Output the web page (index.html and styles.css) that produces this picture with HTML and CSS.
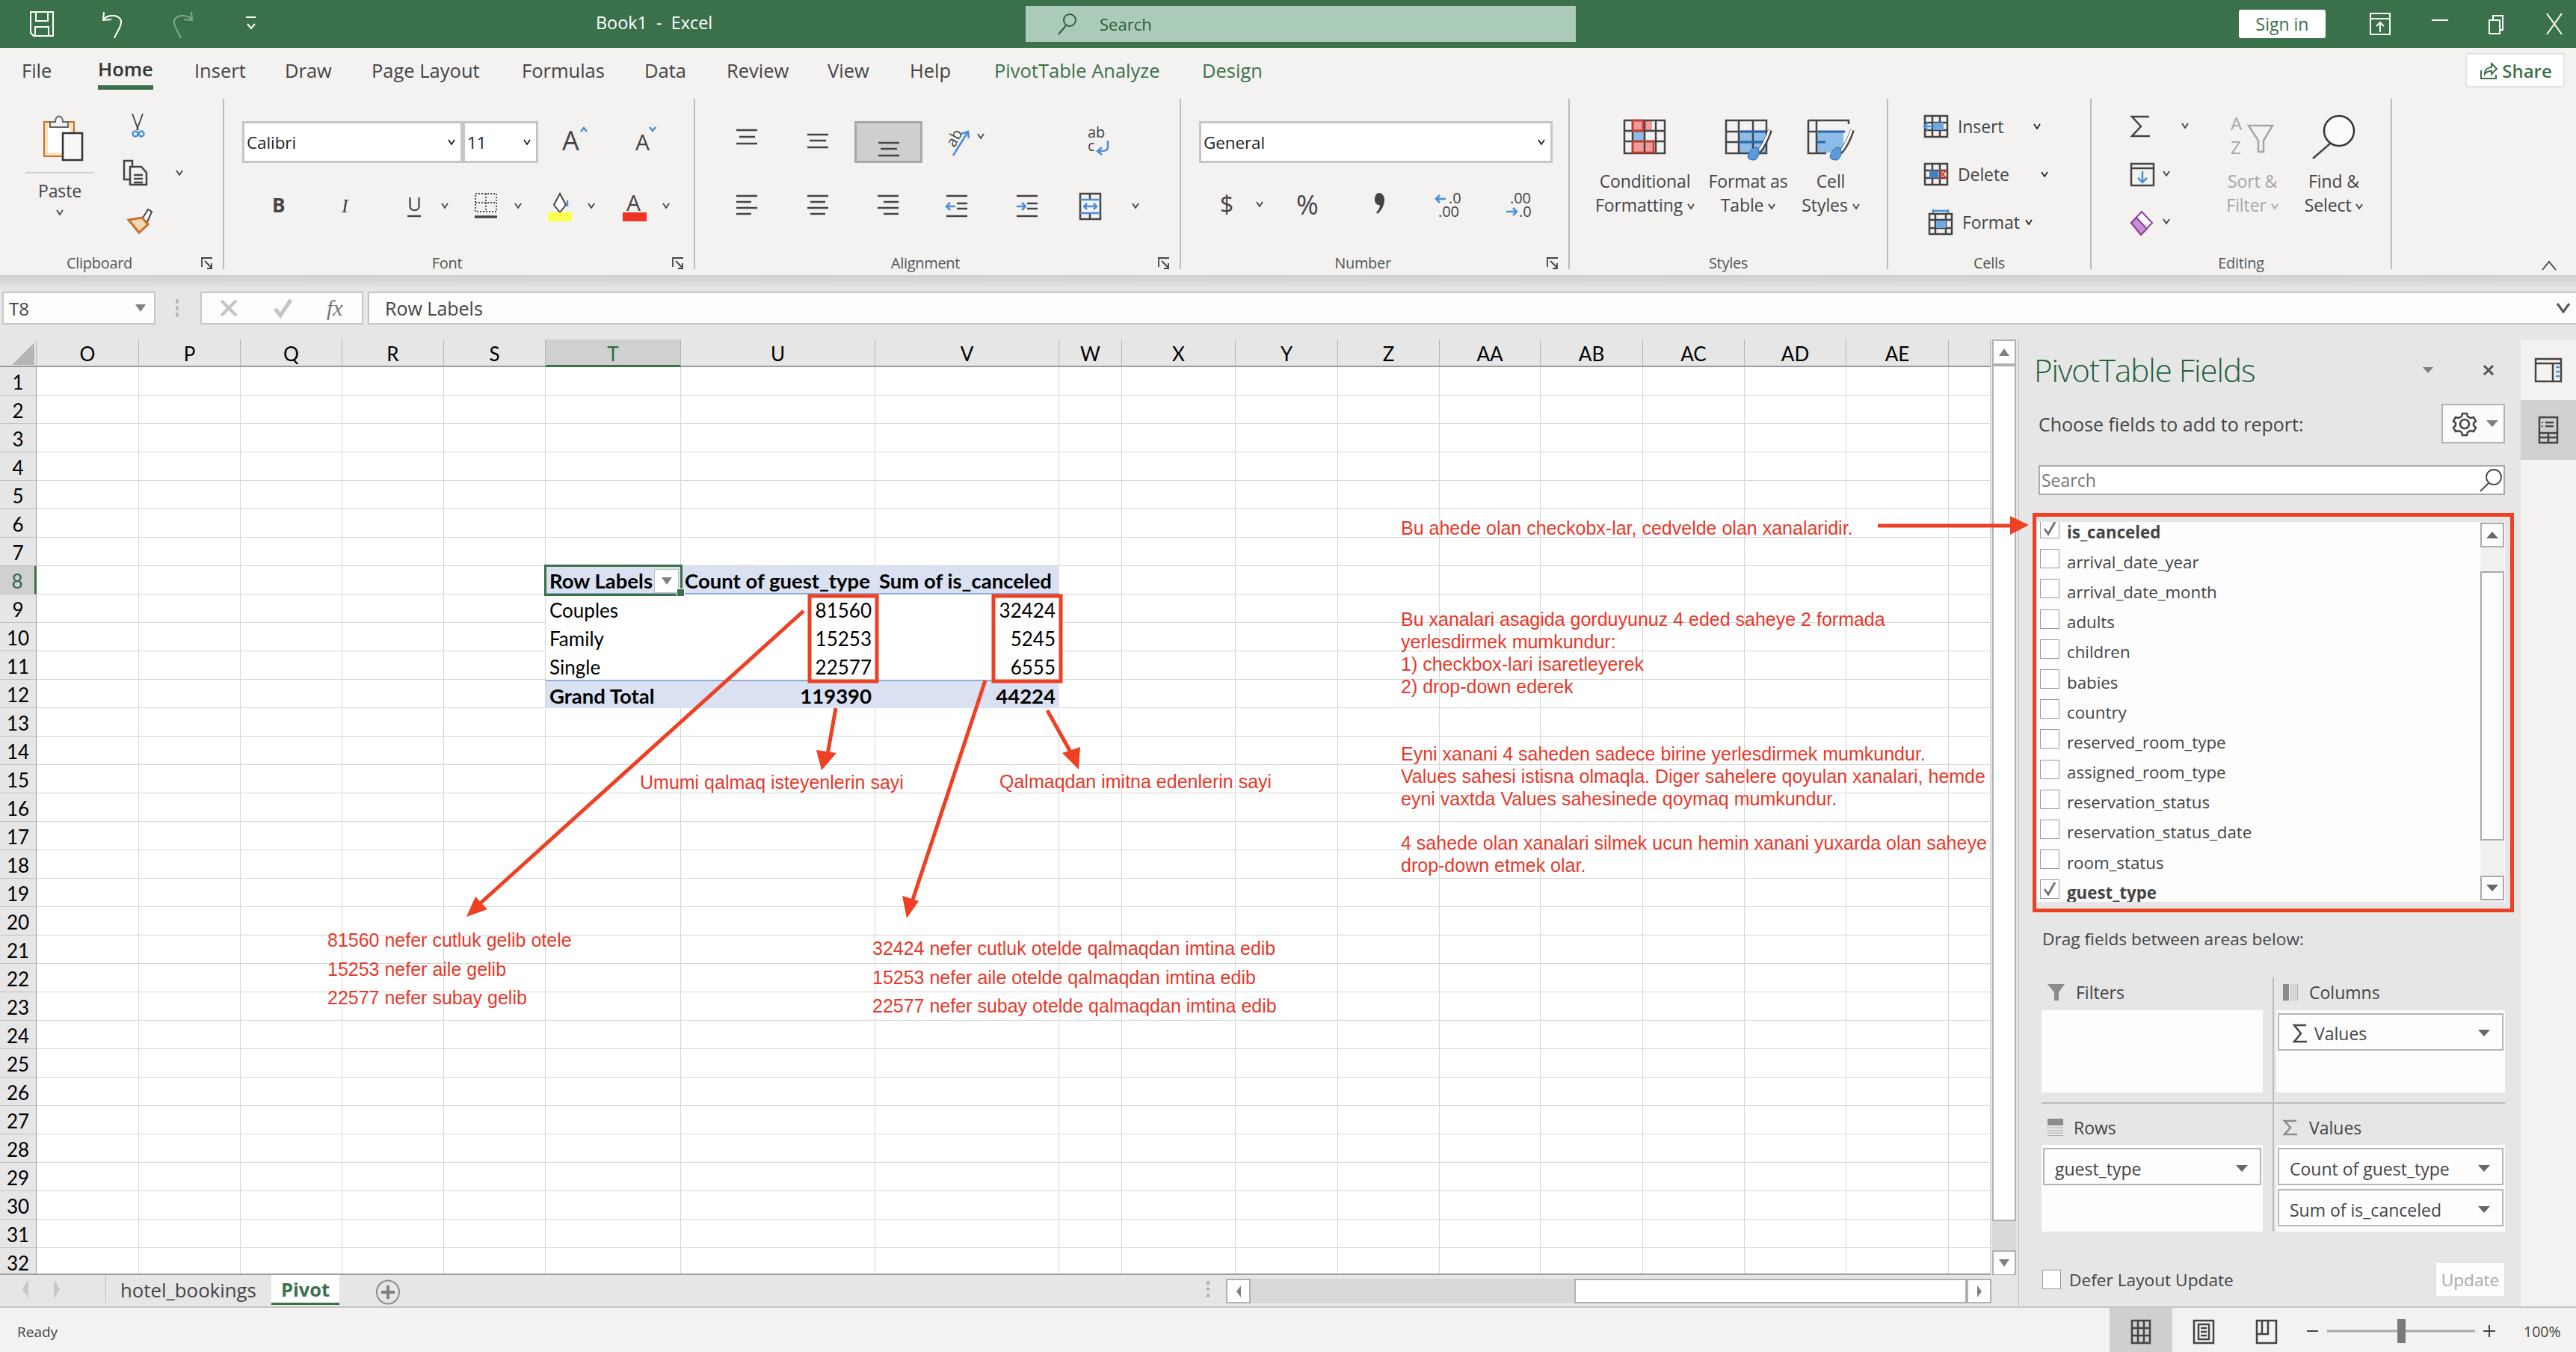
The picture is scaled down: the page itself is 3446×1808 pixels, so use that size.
FILE: index.html
```html
<!DOCTYPE html>
<html lang="en">

<head>
    <meta charset="UTF-8">
    <title>Book1 - Excel</title>
    <link rel="stylesheet" href="styles.css">
</head>

<body>
    <div class="app">
        <!-- title bar -->
        <div class="titlebar">
            <div class="qat">
                <svg width="96" height="40" viewBox="0 0 96 40"><path class="wl" d="M1 4h30v32H5l-4-4zM8 4v12h16V4M7 36V24h18v12"/></svg>
                <svg width="94" height="40" viewBox="0 0 94 40"><path class="wl" d="M3 4l-1 11 11-1M2 14C10 6 24 8 26 16c1 8-6 14-9 23"/></svg>
                <svg width="98" height="40" viewBox="0 0 98 40"><path class="wl faded" d="M26 4l1 11-11-1M27 14C19 6 5 8 3 16c-1 8 6 14 9 23"/></svg>
                <svg width="16" height="40" viewBox="0 0 16 40"><path class="wl" d="M1 11h13M3 20l5 6 5-6"/></svg>
            </div>
            <div class="doc-title">Book1&nbsp; - &nbsp;Excel</div>
            <div class="tell-me">
                <svg width="30" height="30" viewBox="0 0 30 30"><circle class="dk" cx="19" cy="10" r="8"/><path class="dk" d="M14 17L4 29"/></svg>
                <span>Search</span>
            </div>
            <div class="signin">Sign in</div>
            <svg class="win-btns" width="335" height="64" viewBox="0 0 335 64">
                <path class="wl" d="M60 19h26v28H60zM60 26h26M73 44V31M68 36l5-5 5 5"/>
                <path class="wl" d="M142 28h22"/>
                <path class="wl" d="M219 28h14v18h-14zM224 28v-6h13v19h-4"/>
                <path class="wl" d="M296 19l20 28M316 19l-20 28"/>
            </svg>
        </div>

        <!-- ribbon tabs -->
        <div class="tabs">
            <span>File</span>
            <span class="active">Home</span>
            <span>Insert</span>
            <span>Draw</span>
            <span>Page Layout</span>
            <span>Formulas</span>
            <span>Data</span>
            <span>Review</span>
            <span>View</span>
            <span>Help</span>
            <span class="ctx">PivotTable Analyze</span>
            <span class="ctx">Design</span>
            <div class="share">
                <svg width="26" height="24" viewBox="0 0 26 24"><path class="gr" d="M4 12v11h20v-5M9 17c0-6 4-9 9-9V3l7 7-7 7v-4c-4 0-7 1-9 4z"/></svg>
                Share
            </div>
        </div>

        <!-- ribbon -->
        <div class="ribbon">
            <div class="group g-clip">
                <div class="group-body clip-body">
                    <div class="paste">
                        <svg width="56" height="62" viewBox="0 0 56 62">
                            <rect x="1" y="9" width="40" height="46" fill="#fbe3b5" stroke="#c8702a" stroke-width="2"/>
                            <rect x="6" y="16" width="30" height="34" fill="#fff"/>
                            <path d="M9 16v-7h7c0-10 10-10 10 0h7v7z" fill="#f3f3f3" stroke="#666" stroke-width="2"/>
                            <rect x="26" y="24" width="26" height="36" fill="#f8f8f8" stroke="#333" stroke-width="2.5"/>
                        </svg>
                        <div class="paste-line"></div>
                        <div class="paste-text">Paste</div>
                        <svg width="10" height="8" viewBox="0 0 10 8"><path class="ch" d="M1 1l4 6 4-6"/></svg>
                    </div>
                    <div class="clip-tools">
                        <svg width="60" height="32" viewBox="0 0 60 32">
                            <path class="ln thin" d="M12 0l8 22M26 0l-8 22"/>
                            <circle class="bl" cx="16" cy="27" r="3.5"/><circle class="bl" cx="24" cy="27" r="3.5"/>
                        </svg>
                        <svg width="88" height="34" viewBox="0 0 88 34">
                            <path class="ln" d="M9 26H1V1h11v8"/>
                            <path class="ln" d="M9 9h15l7 8v16H9zM14 20h12M14 25h12M14 30h12"/>
                            <path class="ch" d="M71 14l4 6 4-6"/>
                        </svg>
                        <svg width="60" height="34" viewBox="0 0 60 34">
                            <path d="M25 15l8-13 5 3-6 14z" fill="#fff" stroke="#444" stroke-width="2"/>
                            <path d="M7 16l18-3 8 9-12 11z" fill="#f4d9b4" stroke="#c8702a" stroke-width="3"/>
                        </svg>
                    </div>
                </div>
                <div class="group-foot">
                    <span class="group-label">Clipboard</span>
                    <svg class="launcher" width="16" height="16" viewBox="0 0 16 16"><path class="ln thin" d="M15 1H1v12M5 5l9 9M14 8v7H8"/></svg>
                </div>
            </div>

            <div class="group g-font">
                <div class="group-body">
                    <div class="font-top">
                        <div class="select sel-font">Calibri <svg width="10" height="8" viewBox="0 0 10 8"><path class="ch dark" d="M1 1l4 6 4-6"/></svg></div>
                        <div class="select sel-size">11 <svg width="10" height="8" viewBox="0 0 10 8"><path class="ch dark" d="M1 1l4 6 4-6"/></svg></div>
                        <svg class="grow" width="98" height="56" viewBox="0 0 98 56"><text class="glyph g36" x="0" y="39">A</text><path class="bl" d="M25 14l4-5 4 5"/></svg>
                        <svg width="40" height="56" viewBox="0 0 40 56"><text class="glyph g30" x="0" y="39">A</text><path class="bl" d="M19 8l4 5 4-5"/></svg>
                    </div>
                    <div class="font-bottom">
                        <svg width="93" height="34" viewBox="0 0 93 34"><text class="glyph g26 bold" x="0" y="26">B</text></svg>
                        <svg width="88" height="34" viewBox="0 0 88 34"><text class="glyph g26 ital" x="0" y="26">I</text></svg>
                        <svg width="90" height="34" viewBox="0 0 90 34"><text class="glyph g26" x="0" y="24">U</text><path class="ln" d="M0 31h18"/><path class="ch" d="M46 14l4 6 4-6"/></svg>
                        <svg width="98" height="34" viewBox="0 0 98 34"><path class="ln dash" d="M1 1h28v24H1zM15 1v24M1 13h28"/><path class="ln thick" d="M0 32h30"/><path class="ch" d="M54 14l4 6 4-6"/></svg>
                        <svg width="100" height="38" viewBox="0 0 100 38"><path d="M16 1l8 15-8 10-8-10z" fill="#fff" stroke="#444" stroke-width="2"/><path class="bl thick" d="M26 10v8"/><rect x="0" y="26" width="32" height="12" fill="#ffff4d"/><path class="ch" d="M54 14l4 6 4-6"/></svg>
                        <svg width="66" height="38" viewBox="0 0 66 38"><text class="glyph g30" x="5" y="24">A</text><rect x="0" y="26" width="32" height="12" fill="#ee3224"/><path class="ch" d="M54 14l4 6 4-6"/></svg>
                    </div>
                </div>
                <div class="group-foot">
                    <span class="group-label">Font</span>
                    <svg class="launcher" width="16" height="16" viewBox="0 0 16 16"><path class="ln thin" d="M15 1H1v12M5 5l9 9M14 8v7H8"/></svg>
                </div>
            </div>

            <div class="group g-align">
                <div class="group-body">
                    <div class="align-top">
                        <svg width="95" height="56" viewBox="0 0 95 56"><path class="ln" d="M0 12h28M4 21h21M0 30h28"/></svg>
                        <svg width="63" height="56" viewBox="0 0 63 56"><path class="ln" d="M0 18h28M3 26h22M0 35h28"/></svg>
                        <div class="align-on"><svg width="28" height="56" viewBox="0 0 28 56"><path class="ln" d="M0 26h28M3 34h22M0 43h28"/></svg></div>
                        <svg class="orient" width="192" height="56" viewBox="0 0 192 56">
                            <text class="glyph g20" transform="translate(14 36) rotate(-62)">ab</text>
                            <path class="bl" d="M12 46l20-32M23 17l9-3 1 9"/>
                            <path class="ch" d="M45 17l4 6 4-6"/>
                        </svg>
                        <svg width="34" height="56" viewBox="0 0 34 56">
                            <text class="glyph g20" x="0" y="22">ab</text>
                            <text class="glyph g20" x="0" y="40">c</text>
                            <path class="bl" d="M27 26v9c0 5-5 5-13 5M19 35l-6 5 6 5"/>
                        </svg>
                    </div>
                    <div class="align-bottom">
                        <svg width="95" height="34" viewBox="0 0 95 34"><path class="ln" d="M0 4h28M0 12h20M0 20h28M0 28h20"/></svg>
                        <svg width="94" height="34" viewBox="0 0 94 34"><path class="ln" d="M0 4h28M4 12h20M0 20h28M4 28h20"/></svg>
                        <svg width="92" height="34" viewBox="0 0 92 34"><path class="ln" d="M0 4h28M8 12h20M0 20h28M8 28h20"/></svg>
                        <svg width="94" height="34" viewBox="0 0 94 34"><path class="ln" d="M0 4h28M14 14h14M14 21h14M0 31h28"/><path class="bl" d="M12 18H0M5 13l-5 5 5 5"/></svg>
                        <svg width="84" height="34" viewBox="0 0 84 34"><path class="ln" d="M0 4h28M14 14h14M14 21h14M0 31h28"/><path class="bl" d="M0 18h12M7 13l5 5-5 5"/></svg>
                        <svg width="84" height="36" viewBox="0 0 84 36"><path class="ln" d="M1 1h27v34H1zM14 1v8M14 27v8"/><path class="bl" d="M1 9h27M1 27h27M6 18h17M10 14l-4 4 4 4M19 14l4 4-4 4"/><path class="ch" d="M71 14l4 6 4-6"/></svg>
                    </div>
                </div>
                <div class="group-foot">
                    <span class="group-label">Alignment</span>
                    <svg class="launcher" width="16" height="16" viewBox="0 0 16 16"><path class="ln thin" d="M15 1H1v12M5 5l9 9M14 8v7H8"/></svg>
                </div>
            </div>

            <div class="group g-number">
                <div class="group-body">
                    <div class="select sel-num">General <svg width="10" height="8" viewBox="0 0 10 8"><path class="ch dark" d="M1 1l4 6 4-6"/></svg></div>
                    <div class="num-bottom">
                        <svg width="99" height="36" viewBox="0 0 99 36"><text class="glyph g32" x="-4" y="29">$</text><path class="ch" d="M45 14l4 6 4-6"/></svg>
                        <svg width="102" height="36" viewBox="0 0 102 36"><text class="glyph g36" x="-1" y="31">%</text></svg>
                        <svg width="83" height="36" viewBox="0 0 83 36"><path d="M8 2c4 0 7 4 7 9 0 8-4 14-9 19l-2-2c3-3 5-6 5-10-3 1-7-2-7-7s2-9 6-9z" fill="#444"/></svg>
                        <svg width="94" height="36" viewBox="0 0 94 36">
                            <text class="glyph g20" x="18" y="16">.0</text><text class="glyph g20" x="4" y="34">.00</text>
                            <path class="bl" d="M14 10H1M6 5l-5 5 5 5"/>
                        </svg>
                        <svg width="40" height="36" viewBox="0 0 40 36">
                            <text class="glyph g20" x="6" y="16">.00</text><text class="glyph g20" x="18" y="34">.0</text>
                            <path class="bl" d="M1 27h14M10 22l5 5-5 5"/>
                        </svg>
                    </div>
                </div>
                <div class="group-foot">
                    <span class="group-label">Number</span>
                    <svg class="launcher" width="16" height="16" viewBox="0 0 16 16"><path class="ln thin" d="M15 1H1v12M5 5l9 9M14 8v7H8"/></svg>
                </div>
            </div>

            <div class="group g-styles">
                <div class="group-body styles-body">
                    <div class="big big-cf">
                        <div class="big-icon">
                            <svg width="58" height="46" viewBox="0 0 58 46">
                                <rect x="12" y="1" width="26" height="14" fill="#f19a9a"/><rect x="12" y="15" width="16" height="14" fill="#8dbce8"/><rect x="12" y="29" width="28" height="15" fill="#f19a9a"/>
                                <path class="ln" d="M1 1h54v44H1zM12 1v44M28 1v44M43 1v44M1 15h54M1 29h54"/>
                                <path d="M12 1h14v14H12zM12 29h28v15H12z" fill="none" stroke="#c8392b" stroke-width="2.5"/>
                            </svg>
                        </div>
                        <div>Conditional</div>
                        <div>Formatting <svg width="10" height="8" viewBox="0 0 10 8"><path class="ch" d="M1 1l4 6 4-6"/></svg></div>
                    </div>
                    <div class="big big-ft">
                        <div class="big-icon">
                            <svg width="62" height="56" viewBox="0 0 62 56">
                                <rect x="18" y="16" width="36" height="28" fill="#8dbce8"/>
                                <path class="ln" d="M1 1h54v44H1zM1 16h54M1 30h54M18 1v44M37 1v44"/>
                                <path d="M18 16h36M18 30h36" stroke="#2a66b0" stroke-width="3"/>
                                <path d="M60 14c-4 12-9 22-16 30" fill="none" stroke="#444" stroke-width="6"/>
                                <path d="M59 14c-4 12-9 22-16 30" fill="none" stroke="#fff" stroke-width="3"/>
                                <path d="M30 50c2-10 8-15 14-12 3 6 0 16-6 16-4 0-7-1-8-4z" fill="#5b9bd8" stroke="#2a66b0"/>
                            </svg>
                        </div>
                        <div>Format as</div>
                        <div>Table <svg width="10" height="8" viewBox="0 0 10 8"><path class="ch" d="M1 1l4 6 4-6"/></svg></div>
                    </div>
                    <div class="big big-cs">
                        <div class="big-icon">
                            <svg width="62" height="56" viewBox="0 0 62 56">
                                <rect x="12" y="16" width="36" height="28" fill="#8dbce8"/>
                                <path class="ln" d="M1 1h54v5M1 1v44h24M12 1v44M1 16h12"/>
                                <path d="M12 16h38M12 30h12" stroke="#2a66b0" stroke-width="3"/>
                                <path d="M60 14c-4 12-9 22-16 30" fill="none" stroke="#444" stroke-width="6"/>
                                <path d="M59 14c-4 12-9 22-16 30" fill="none" stroke="#fff" stroke-width="3"/>
                                <path d="M30 50c2-10 8-15 14-12 3 6 0 16-6 16-4 0-7-1-8-4z" fill="#5b9bd8" stroke="#2a66b0"/>
                            </svg>
                        </div>
                        <div>Cell</div>
                        <div>Styles <svg width="10" height="8" viewBox="0 0 10 8"><path class="ch" d="M1 1l4 6 4-6"/></svg></div>
                    </div>
                </div>
                <div class="group-foot no-launch"><span class="group-label">Styles</span></div>
            </div>

            <div class="group g-cells">
                <div class="group-body cells-body">
                    <div class="cell-btn c-insert">
                        <svg width="45" height="30" viewBox="0 0 45 30"><path class="ln" d="M1 1h30v28H1zM1 10h30M1 20h30M11 1v28M21 1v28"/><rect x="12" y="10" width="14" height="10" fill="#6fa8dc"/><path class="bl" d="M13 15H0M5 10l-5 5 5 5"/></svg>
                        <span>Insert</span>
                        <svg width="10" height="8" viewBox="0 0 10 8"><path class="ch dark" d="M1 1l4 6 4-6"/></svg>
                    </div>
                    <div class="cell-btn c-delete">
                        <svg width="45" height="30" viewBox="0 0 45 30"><path class="ln" d="M1 1h30v28H1zM1 10h30M1 20h30M11 1v28M21 1v28"/><rect x="7" y="10" width="12" height="10" fill="#3f7fc4"/><path d="M20 9l10 12M30 9L20 21" fill="none" stroke="#e8392a" stroke-width="2"/></svg>
                        <span>Delete</span>
                        <svg width="10" height="8" viewBox="0 0 10 8"><path class="ch dark" d="M1 1l4 6 4-6"/></svg>
                    </div>
                    <div class="cell-btn c-format">
                        <svg width="45" height="34" viewBox="0 0 45 34"><path class="bl" d="M6 2h20M6 0v5M26 0v5"/><path class="ln" d="M1 6h30v27H1zM1 14h30M1 25h30M9 6v27M23 6v27"/><rect x="10" y="15" width="13" height="10" fill="#6fa8dc"/></svg>
                        <span>Format</span>
                        <svg width="10" height="8" viewBox="0 0 10 8"><path class="ch dark" d="M1 1l4 6 4-6"/></svg>
                    </div>
                </div>
                <div class="group-foot no-launch"><span class="group-label">Cells</span></div>
            </div>

            <div class="group g-edit">
                <div class="group-body edit-body">
                    <div class="edit-tools">
                        <svg width="90" height="30" viewBox="0 0 90 30"><path class="ln" d="M25 2H2l12 13L2 28h24"/><path class="ch" d="M69 11l4 6 4-6"/></svg>
                        <svg width="60" height="30" viewBox="0 0 60 30"><path class="ln" d="M1 1h30v29H1zM1 7h30"/><path class="bl" d="M16 11v15M10 20l6 6 6-6"/><path class="ch" d="M44 11l4 6 4-6"/></svg>
                        <svg width="60" height="32" viewBox="0 0 60 32"><path d="M15 1l14 15-15 16L1 16z" fill="#fff" stroke="#8c3fa0" stroke-width="2"/><path d="M8 9l14 15-8 8L1 16z" fill="#c48fd0" stroke="#8c3fa0" stroke-width="2"/><path class="ch" d="M44 11l4 6 4-6"/></svg>
                    </div>
                    <div class="big big-sort off">
                        <div class="big-icon icon-sort">
                            <svg width="58" height="56" viewBox="0 0 58 56">
                                <text class="glyph g24 mute" x="0" y="20">A</text><text class="glyph g24 mute" x="0" y="52">Z</text>
                                <path d="M24 14h32L44 34v15h-7V34z" fill="none" stroke="#a6a6a6" stroke-width="2.5"/>
                            </svg>
                        </div>
                        <div>Sort &amp;</div>
                        <div>Filter <svg width="10" height="8" viewBox="0 0 10 8"><path class="ch mute-line" d="M1 1l4 6 4-6"/></svg></div>
                    </div>
                    <div class="big big-find">
                        <div class="big-icon icon-sort">
                            <svg width="58" height="60" viewBox="0 0 58 60"><ellipse cx="36" cy="21" rx="20" ry="20" fill="#fbfbfb" stroke="#333" stroke-width="2.5"/><path class="ln" d="M24 38L1 58"/></svg>
                        </div>
                        <div>Find &amp;</div>
                        <div>Select <svg width="10" height="8" viewBox="0 0 10 8"><path class="ch" d="M1 1l4 6 4-6"/></svg></div>
                    </div>
                </div>
                <div class="group-foot no-launch"><span class="group-label">Editing</span></div>
            </div>

            <svg class="collapse" width="22" height="14" viewBox="0 0 22 14"><path class="ln thin" d="M2 13l9-11 9 11"/></svg>
        </div>

        <!-- formula bar -->
        <div class="formula-bar">
            <div class="name-box">T8 <svg width="16" height="12" viewBox="0 0 16 12"><path d="M1 1h14L8 11z" fill="#808080"/></svg></div>
            <svg class="fb-dots" width="60" height="36" viewBox="0 0 60 36"><path d="M29 6v6M29 15v6M29 24v6" stroke="#b3b3b3" stroke-width="3"/></svg>
            <div class="fn-box">
                <svg width="30" height="26" viewBox="0 0 30 26"><path d="M4 3l20 20M24 3L4 23" stroke="#c4c4c4" stroke-width="4"/></svg>
                <svg width="30" height="26" viewBox="0 0 30 26"><path d="M4 14l7 9L25 2" fill="none" stroke="#c4c4c4" stroke-width="5"/></svg>
                <span>fx</span>
            </div>
            <div class="formula-input">
                Row Labels
                <svg width="20" height="14" viewBox="0 0 20 14"><path d="M2 1l8 11 8-11" fill="none" stroke="#555" stroke-width="3"/></svg>
            </div>
        </div>

        <!-- main area -->
        <div class="main">
            <div class="workspace">
                <div class="sheet-row">
                    <div class="sheet">
                        <div class="corner"><svg width="30" height="30" viewBox="0 0 30 30"><path d="M30 0v30H0z" fill="#b5b5b5"/></svg></div>
                        <div class="ch-cell">O</div>
                        <div class="ch-cell">P</div>
                        <div class="ch-cell">Q</div>
                        <div class="ch-cell">R</div>
                        <div class="ch-cell">S</div>
                        <div class="ch-cell on">T</div>
                        <div class="ch-cell">U</div>
                        <div class="ch-cell">V</div>
                        <div class="ch-cell">W</div>
                        <div class="ch-cell">X</div>
                        <div class="ch-cell">Y</div>
                        <div class="ch-cell">Z</div>
                        <div class="ch-cell">AA</div>
                        <div class="ch-cell">AB</div>
                        <div class="ch-cell">AC</div>
                        <div class="ch-cell">AD</div>
                        <div class="ch-cell">AE</div>
                        <div class="ch-cell"></div>

                        <div class="rh-cell">1</div>
                        <div class="rh-cell">2</div>
                        <div class="rh-cell">3</div>
                        <div class="rh-cell">4</div>
                        <div class="rh-cell">5</div>
                        <div class="rh-cell">6</div>
                        <div class="rh-cell">7</div>
                        <div class="rh-cell on">8</div>
                        <div class="rh-cell">9</div>
                        <div class="rh-cell">10</div>
                        <div class="rh-cell">11</div>
                        <div class="rh-cell">12</div>
                        <div class="rh-cell">13</div>
                        <div class="rh-cell">14</div>
                        <div class="rh-cell">15</div>
                        <div class="rh-cell">16</div>
                        <div class="rh-cell">17</div>
                        <div class="rh-cell">18</div>
                        <div class="rh-cell">19</div>
                        <div class="rh-cell">20</div>
                        <div class="rh-cell">21</div>
                        <div class="rh-cell">22</div>
                        <div class="rh-cell">23</div>
                        <div class="rh-cell">24</div>
                        <div class="rh-cell">25</div>
                        <div class="rh-cell">26</div>
                        <div class="rh-cell">27</div>
                        <div class="rh-cell">28</div>
                        <div class="rh-cell">29</div>
                        <div class="rh-cell">30</div>
                        <div class="rh-cell">31</div>
                        <div class="rh-cell">32</div>

                        <div class="gridlines">
                            <div></div><div></div><div></div><div></div><div></div><div></div>
                            <div></div><div></div><div></div><div></div><div></div><div></div>
                            <div></div><div></div><div></div><div></div><div></div><div></div>
                        </div>

                        <div class="pv head sel r8 ct">Row Labels <span class="pv-filter"><svg width="14" height="10" viewBox="0 0 14 10"><path d="M0 0h14L7 10z" fill="#808080"/></svg></span></div>
                        <div class="pv head r8 cu">Count of guest_type</div>
                        <div class="pv head r8 cv">Sum of is_canceled</div>
                        <div class="pv r9 ct">Couples</div>
                        <div class="pv num r9 cu">81560</div>
                        <div class="pv num r9 cv">32424</div>
                        <div class="pv r10 ct">Family</div>
                        <div class="pv num r10 cu">15253</div>
                        <div class="pv num r10 cv">5245</div>
                        <div class="pv r11 ct">Single</div>
                        <div class="pv num r11 cu">22577</div>
                        <div class="pv num r11 cv">6555</div>
                        <div class="pv total r12 ct">Grand Total</div>
                        <div class="pv total num r12 cu">119390</div>
                        <div class="pv total num r12 cv">44224</div>
                    </div>
                    <div class="vscroll">
                        <div class="sb-btn sb-up"><svg width="16" height="12" viewBox="0 0 16 12"><path d="M8 1l7 10H1z" fill="#808080"/></svg></div>
                        <div class="sb-thumb"></div>
                        <div class="sb-btn sb-down"><svg width="16" height="12" viewBox="0 0 16 12"><path d="M1 1h14L8 11z" fill="#808080"/></svg></div>
                    </div>
                </div>
                <div class="sheetbar">
                    <div class="sheet-nav">
                        <svg width="10" height="28" viewBox="0 0 10 28"><path d="M9 1v26L1 14z" fill="#c8c8c8"/></svg>
                        <svg width="10" height="28" viewBox="0 0 10 28"><path d="M1 1v26l8-13z" fill="#c8c8c8"/></svg>
                    </div>
                    <div class="sheet-tab">hotel_bookings</div>
                    <div class="sheet-tab on">Pivot</div>
                    <svg class="add-sheet" width="32" height="34" viewBox="0 0 32 34"><ellipse cx="16" cy="17" rx="15" ry="15.5" fill="none" stroke="#8c8c8c" stroke-width="2"/><path d="M7 17h18M16 8v18" stroke="#808080" stroke-width="4"/></svg>
                    <svg class="hs-dots" width="6" height="22" viewBox="0 0 6 22"><path d="M3 0v5M3 9v4M3 17v5" stroke="#b3b3b3" stroke-width="4"/></svg>
                    <div class="hscroll">
                        <div class="hs-btn"><svg width="8" height="16" viewBox="0 0 8 16"><path d="M7 0v16L1 8z" fill="#808080"/></svg></div>
                        <div class="hs-track"></div>
                        <div class="hs-thumb"></div>
                        <div class="hs-btn"><svg width="8" height="16" viewBox="0 0 8 16"><path d="M1 0v16l6-8z" fill="#808080"/></svg></div>
                    </div>
                </div>
            </div>

            <!-- pivot field list -->
            <div class="panel">
                <div class="panel-head">
                    <span class="panel-title">PivotTable Fields</span>
                    <svg class="ph-caret" width="14" height="8" viewBox="0 0 14 8"><path d="M0 0h14L7 8z" fill="#808080"/></svg>
                    <svg class="ph-close" width="14" height="14" viewBox="0 0 14 14"><path d="M1 1l12 12M13 1L1 13" stroke="#555" stroke-width="3"/></svg>
                </div>
                <div class="choose-row">
                    <span>Choose fields to add to report:</span>
                    <div class="gear-btn">
                        <svg width="34" height="32" viewBox="0 0 34 32">
                            <path class="ln" d="M14 2h6l1 4 4 2 4-1 3 5-3 3v3l3 3-3 5-4-1-4 2-1 4h-6l-1-4-4-2-4 1-3-5 3-3v-3L2 12l3-5 4 1 4-2z"/>
                            <circle class="ln" cx="17" cy="16" r="6"/>
                        </svg>
                        <svg width="16" height="10" viewBox="0 0 16 10"><path d="M0 0h16L8 9z" fill="#808080"/></svg>
                    </div>
                </div>
                <div class="field-search">
                    <span>Search</span>
                    <svg width="32" height="32" viewBox="0 0 32 32"><circle class="ln thin" cx="19" cy="12" r="10"/><path class="ln thin" d="M12 20L1 31"/></svg>
                </div>
                <div class="field-list">
                    <div class="fields">
                        <label class="field on"><i class="box"><svg width="22" height="22" viewBox="0 0 22 22"><path d="M4 11l5 7 9-16" fill="none" stroke="#777" stroke-width="3"/></svg></i>is_canceled</label>
                        <label class="field"><i class="box"></i>arrival_date_year</label>
                        <label class="field"><i class="box"></i>arrival_date_month</label>
                        <label class="field"><i class="box"></i>adults</label>
                        <label class="field"><i class="box"></i>children</label>
                        <label class="field"><i class="box"></i>babies</label>
                        <label class="field"><i class="box"></i>country</label>
                        <label class="field"><i class="box"></i>reserved_room_type</label>
                        <label class="field"><i class="box"></i>assigned_room_type</label>
                        <label class="field"><i class="box"></i>reservation_status</label>
                        <label class="field"><i class="box"></i>reservation_status_date</label>
                        <label class="field"><i class="box"></i>room_status</label>
                        <label class="field on"><i class="box"><svg width="22" height="22" viewBox="0 0 22 22"><path d="M4 11l5 7 9-16" fill="none" stroke="#777" stroke-width="3"/></svg></i>guest_type</label>
                    </div>
                    <div class="list-scroll">
                        <div class="ls-btn"><svg width="16" height="9" viewBox="0 0 16 9"><path d="M8 0l8 9H0z" fill="#666"/></svg></div>
                        <div class="ls-thumb"></div>
                        <div class="ls-btn ls-down"><svg width="16" height="9" viewBox="0 0 16 9"><path d="M0 0h16L8 9z" fill="#666"/></svg></div>
                    </div>
                </div>
                <div class="drag-text">Drag fields between areas below:</div>
                <div class="areas">
                    <div class="area a-filters">
                        <div class="area-head">
                            <svg width="24" height="24" viewBox="0 0 24 24"><path d="M0 1h23l-8 11v11H9V12z" fill="#8c8c8c"/></svg>
                            Filters
                        </div>
                        <div class="area-box"></div>
                    </div>
                    <div class="area a-cols">
                        <div class="area-head">
                            <svg width="20" height="22" viewBox="0 0 20 22"><rect width="8" height="22" fill="#8c8c8c"/><path d="M11 0v22M14 0v22M17 0v22M19.500 0v22" stroke="#b0b0b0"/></svg>
                            Columns
                        </div>
                        <div class="area-box">
                            <div class="pill"><span class="pill-name"><svg class="pill-sum" width="20" height="26" viewBox="0 0 20 26"><path class="ln" d="M18 2H2l9 11-9 11h17"/></svg>Values</span><svg width="16" height="10" viewBox="0 0 16 10"><path d="M0 0h16L8 9z" fill="#666"/></svg></div>
                        </div>
                    </div>
                    <div class="area a-rows">
                        <div class="area-head">
                            <svg width="21" height="24" viewBox="0 0 21 24"><rect width="21" height="9" fill="#8c8c8c"/><path d="M0 12h21M0 15.500h21M0 19h21M0 22.500h21" stroke="#b0b0b0"/></svg>
                            Rows
                        </div>
                        <div class="area-box">
                            <div class="pill"><span class="pill-name">guest_type</span><svg width="16" height="10" viewBox="0 0 16 10"><path d="M0 0h16L8 9z" fill="#666"/></svg></div>
                        </div>
                    </div>
                    <div class="area a-vals">
                        <div class="area-head">
                            <svg width="20" height="22" viewBox="0 0 20 22"><path d="M18 2H2l8 9-8 9h17" fill="none" stroke="#8c8c8c" stroke-width="2.500"/></svg>
                            Values
                        </div>
                        <div class="area-box">
                            <div class="pill"><span class="pill-name">Count of guest_type</span><svg width="16" height="10" viewBox="0 0 16 10"><path d="M0 0h16L8 9z" fill="#666"/></svg></div>
                            <div class="pill"><span class="pill-name">Sum of is_canceled</span><svg width="16" height="10" viewBox="0 0 16 10"><path d="M0 0h16L8 9z" fill="#666"/></svg></div>
                        </div>
                    </div>
                </div>
                <div class="panel-foot">
                    <i class="box defer-box"></i>
                    <span>Defer Layout Update</span>
                    <div class="update-btn">Update</div>
                </div>
            </div>

            <div class="side-strip">
                <div class="strip-btn">
                    <svg width="36" height="32" viewBox="0 0 36 32"><path class="ln" d="M1 1h34v30H1zM1 7h34M24 7v24"/><path class="bl" d="M28 12h5M28 18h5M28 24h5"/></svg>
                </div>
                <div class="strip-btn on">
                    <svg width="26" height="36" viewBox="0 0 26 36"><path class="ln" d="M1 1h24v34H1zM1 22h24M1 28h24M13 22v13M9 8h11M9 13h11"/><path class="ln thin" d="M4 8h2M4 13h2"/></svg>
                </div>
            </div>
        </div>

        <!-- status bar -->
        <div class="statusbar">
            <span class="ready">Ready</span>
            <div class="status-right">
                <div class="view-btn on"><svg width="26" height="36" viewBox="0 0 26 36"><path class="ln" d="M1 4h24v30H1zM1 14h24M1 24h24M9 4v30M17 4v30"/></svg></div>
                <div class="view-btn"><svg width="28" height="36" viewBox="0 0 28 36"><path class="ln" d="M1 4h26v30H1zM7 9h14v20H7zM10 14h8M10 19h8M10 24h8"/></svg></div>
                <div class="view-btn"><svg width="28" height="36" viewBox="0 0 28 36"><path class="ln" d="M1 4h26v30H1zM1 22h15V4M8 4v18"/></svg></div>
                <svg class="zoom-slider" width="276" height="36" viewBox="0 0 276 36">
                    <path d="M12 18h15" stroke="#444" stroke-width="2"/>
                    <path d="M39 18h198" stroke="#aaa" stroke-width="3"/>
                    <rect x="133" y="2" width="11" height="32" fill="#7a7a7a"/>
                    <path d="M248 18h16M256 10v16" stroke="#444" stroke-width="2"/>
                </svg>
                <span class="zoom-pct">100%</span>
            </div>
        </div>

        <!-- notes drawn on top of the screenshot -->
        <svg class="marks" width="3446" height="1808" viewBox="0 0 3446 1808">
            <g fill="none" stroke="#ee4023" stroke-width="5">
                <rect x="1083" y="797" width="90" height="114"/>
                <rect x="1329" y="797" width="90" height="114"/>
                <rect x="2721.500" y="688.500" width="639" height="529"/>
                <path d="M1075 817L638 1212M1118 947l-11 62M1318 910l-99 299M1401 950l33 59M2512 703h180"/>
            </g>
            <g fill="#ee4023">
                <path d="M624 1226l12-27 16 17z"/>
                <path d="M1099 1030l-7-27 27 4z"/>
                <path d="M1213 1228l-6-30 22 7z"/>
                <path d="M1443 1029l-22-22 24-8z"/>
                <path d="M2714 702l-25-12v25z"/>
            </g>
        </svg>
        <div class="note n-ahede">Bu ahede olan checkobx-lar, cedvelde olan xanalaridir.</div>
        <div class="note n-forma">Bu xanalari asagida gorduyunuz 4 eded saheye 2 formada<br>yerlesdirmek mumkundur:<br>1) checkbox-lari isaretleyerek<br>2) drop-down ederek</div>
        <div class="note n-eyni">Eyni xanani 4 saheden sadece birine yerlesdirmek mumkundur.<br>Values sahesi istisna olmaqla. Diger sahelere qoyulan xanalari, hemde<br>eyni vaxtda Values sahesinede qoymaq mumkundur.</div>
        <div class="note n-sil">4 sahede olan xanalari silmek ucun hemin xanani yuxarda olan saheye<br>drop-down etmek olar.</div>
        <div class="note n-umumi">Umumi qalmaq isteyenlerin sayi</div>
        <div class="note n-imtina">Qalmaqdan imitna edenlerin sayi</div>
        <div class="note n-left">81560 nefer cutluk gelib otele<br>15253 nefer aile gelib<br>22577 nefer subay gelib</div>
        <div class="note n-right">32424 nefer cutluk otelde qalmaqdan imtina edib<br>15253 nefer aile otelde qalmaqdan imtina edib<br>22577 nefer subay otelde qalmaqdan imtina edib</div>
    </div>
</body>

</html>
```
FILE: styles.css
```css
* {
    box-sizing: border-box;
}

html,
body {
    margin: 0;
    padding: 0;
    overflow: hidden;
}

body {
    font-family: "Open Sans", "Noto Sans", sans-serif;
    color: #444;
    background: #f3f2f1;
}

svg {
    display: block;
    flex: none;
    overflow: visible;
}

.app {
    position: relative;
    width: 3446px;
    height: 1808px;
    display: flex;
    flex-direction: column;
    overflow: hidden;
}

/* svg line helpers */
.wl {
    fill: none;
    stroke: #fff;
    stroke-width: 2;
}

.faded {
    stroke: #7fa78d;
}

.dk {
    fill: none;
    stroke: #2e5e3e;
    stroke-width: 2;
}

.gr {
    fill: none;
    stroke: #3b714a;
    stroke-width: 2;
}

.ln {
    fill: none;
    stroke: #444;
    stroke-width: 2.5;
}

.thin {
    stroke-width: 1.800;
}

.thick {
    stroke-width: 3.500;
}

.dash {
    stroke-dasharray: 2 2;
    stroke-width: 1.800;
}

.bl {
    fill: none;
    stroke: #4a90d9;
    stroke-width: 2.5;
}

.ch {
    fill: none;
    stroke: #444;
    stroke-width: 1.800;
}

.ch.dark {
    stroke: #222;
}

.ch.mute-line {
    stroke: #a6a6a6;
}

.glyph {
    font-family: "Open Sans", sans-serif;
    fill: #444;
}

.g20 { font-size: 20px; }
.g24 { font-size: 24px; }
.g26 { font-size: 26px; }
.g30 { font-size: 30px; }
.g32 { font-size: 32px; }
.g36 { font-size: 36px; }

.bold {
    font-weight: 700;
}

.ital {
    font-style: italic;
    font-family: "Liberation Serif", serif;
}

.mute {
    fill: #a6a6a6;
}

/* title bar */
.titlebar {
    height: 64px;
    background: #3b714a;
    color: #fff;
    display: flex;
    align-items: center;
    flex: none;
}

.qat {
    width: 797px;
    padding-left: 40px;
    display: flex;
}

.doc-title {
    width: 575px;
    padding-bottom: 4px;
    font-size: 23.400px;
}

.tell-me {
    width: 736px;
    height: 48px;
    background: #a9cbb7;
    display: flex;
    align-items: center;
    padding-left: 40px;
    gap: 29px;
    color: #2e5e3e;
    font-size: 22px;
}

.signin {
    width: 116px;
    height: 38px;
    margin-left: auto;
    background: #fff;
    color: #3b714a;
    border-radius: 3px;
    font-size: 23px;
    display: flex;
    align-items: center;
    justify-content: center;
}

.win-btns {
    margin-top: -3px;
}

/* ribbon tabs */
.tabs {
    height: 60px;
    flex: none;
    padding-left: 29px;
    display: grid;
    grid-template-columns: 102px 129px 121px 116px 201px 164px 110px 135px 110px 113px 278px 1fr auto;
    align-items: center;
    font-size: 25.500px;
    color: #444;
}

.tabs .active {
    font-weight: 600;
    align-self: stretch;
    justify-self: start;
    color: #333;
    display: flex;
    align-items: center;
    border-bottom: 6px solid #3b714a;
    height: 56px;
    padding-top: 6px;
}

.tabs .ctx {
    color: #3b714a;
}

.share {
    width: 133px;
    height: 46px;
    margin-right: 15px;
    background: #fff;
    border: 2px solid #e3e3e3;
    border-radius: 3px;
    color: #3b714a;
    font-weight: 600;
    font-size: 24px;
    display: flex;
    align-items: center;
    justify-content: center;
    gap: 6px;
}

/* ribbon */
.ribbon {
    height: 244px;
    flex: none;
    padding-top: 8px;
    display: flex;
    font-size: 23px;
    letter-spacing: -0.1px;
}

.group {
    height: 228px;
    border-right: 2px solid #bcbcbc;
    display: flex;
    flex-direction: column;
}

.group-body {
    height: 192px;
    flex: none;
}

.group-foot {
    flex: 1;
    display: flex;
    align-items: flex-end;
}

.group-label {
    flex: 1;
    text-align: center;
    font-size: 20px;
    letter-spacing: -0.3px;
    line-height: 28px;
    margin-bottom: -6px;
    color: #555;
}

.launcher {
    margin: 0 13px 0 3px;
}

.g-clip { width: 300px; }
.g-font { width: 630px; }
.g-align { width: 650px; }
.g-number { width: 520px; }
.g-styles { width: 426px; }
.g-cells { width: 272px; }
.g-edit { width: 402px; }

.collapse {
    margin: 216px 0 0 199px;
}

/* clipboard */
.clip-body {
    display: flex;
}

.paste {
    width: 131px;
    padding: 22px 0 0 34px;
    display: flex;
    flex-direction: column;
}

.paste > svg:first-child {
    margin-left: 24px;
}

.paste-line {
    width: 92px;
    height: 2px;
    background: #cfcfcf;
    margin-top: 14px;
}

.paste-text {
    width: 92px;
    text-align: center;
    line-height: 30px;
    margin-top: 8px;
}

.paste > svg:last-child {
    margin: 10px 0 0 41px;
}

.clip-tools {
    padding-top: 20px;
    padding-left: 34px;
    display: flex;
    flex-direction: column;
    gap: 30px;
}

/* font */
.font-top {
    margin-top: 30px;
    padding-left: 24px;
    display: flex;
}

.select {
    height: 56px;
    border: 3px solid #c6c6c6;
    background: #fff;
    color: #222;
    display: flex;
    align-items: center;
    justify-content: space-between;
    padding: 0 7px 0 3px;
    font-size: 22.500px;
}

.sel-font { width: 295px; }
.sel-size { width: 101px; }

.grow {
    margin-left: 32px;
}

.font-bottom {
    margin-top: 40px;
    padding-left: 64px;
    display: flex;
}

/* alignment */
.align-top {
    margin-top: 30px;
    padding-left: 55px;
    display: flex;
}

.align-on {
    width: 91px;
    height: 56px;
    margin-right: 29px;
    background: #d0cfce;
    border: 3px solid #a9a9a9;
    display: flex;
    justify-content: center;
}

.align-bottom {
    margin-top: 40px;
    padding-left: 55px;
    display: flex;
}

/* number */
.sel-num {
    width: 473px;
    margin: 30px 0 0 24px;
}

.num-bottom {
    margin-top: 38px;
    padding-left: 56px;
    display: flex;
}

/* big buttons */
.styles-body {
    padding-left: 30px;
    display: flex;
}

.big {
    padding-top: 28px;
    text-align: center;
    line-height: 32px;
    color: #444;
    white-space: nowrap;
}

.big > div svg {
    display: inline-block;
    vertical-align: 3px;
}

.big-icon {
    height: 66px;
    display: flex;
    justify-content: center;
}

.big-cf { width: 141px; }
.big-ft { width: 135px; }
.big-cs { width: 86px; }

.off {
    color: #a6a6a6;
}

/* cells */
.cells-body {
    padding: 22px 0 0 48px;
    display: flex;
    flex-direction: column;
    gap: 34px;
}

.cell-btn {
    height: 30px;
    display: flex;
    align-items: center;
    white-space: nowrap;
}

.c-insert svg:last-child { margin-left: 40px; }
.c-delete svg:last-child { margin-left: 42px; }
.c-format { padding-left: 6px; }
.c-format svg:last-child { margin-left: 7px; }

/* editing */
.edit-body {
    display: flex;
}

.edit-tools {
    width: 113px;
    margin-left: 52px;
    padding-top: 22px;
    display: flex;
    flex-direction: column;
    gap: 34px;
}

.big-sort {
    width: 100px;
}

.big-find {
    width: 118px;
}

.icon-sort {
    margin-top: -6px;
    height: 72px;
}

/* formula bar */
.formula-bar {
    height: 86px;
    flex: none;
    background: linear-gradient(#cfcfcf, #e6e6e6 18px);
    padding: 22px 0 0 3px;
    display: flex;
    align-items: flex-start;
    font-size: 24px;
}

.name-box {
    width: 205px;
    height: 44px;
    background: #fdfdfd;
    border: 2px solid #c6c6c6;
    padding: 0 10px 0 7px;
    display: flex;
    align-items: center;
    justify-content: space-between;
}

.fb-dots {
    margin-top: 4px;
}

.fn-box {
    width: 218px;
    height: 44px;
    background: #fdfdfd;
    border: 2px solid #c6c6c6;
    margin-right: 6px;
    padding-left: 22px;
    display: flex;
    align-items: center;
    gap: 42px;
}

.fn-box span {
    font-family: "Liberation Serif", serif;
    font-style: italic;
    font-size: 30px;
    color: #777;
    margin-left: 1px;
}

.formula-input {
    flex: 1;
    height: 44px;
    background: #fdfdfd;
    border: 2px solid #c6c6c6;
    border-right: none;
    padding: 0 7px 0 21px;
    display: flex;
    align-items: center;
    justify-content: space-between;
    font-size: 25px;
}

/* main */
.main {
    height: 1293px;
    flex: none;
    display: flex;
    background: #e6e6e6;
}

.workspace {
    width: 2701px;
    flex: none;
    border-right: 1px solid #bcbcbc;
    display: flex;
    flex-direction: column;
}

.sheet-row {
    height: 1251px;
    flex: none;
    display: flex;
    overflow: hidden;
}

/* sheet grid */
.sheet {
    --cols: 137px 136px 136px 136px 136px 181px 260px 246px 84px 152px 137px 136px 135px 137px 136px 136px 137px 56px;
    width: 2663px;
    height: 1251px;
    flex: none;
    display: grid;
    grid-template-columns: 49px var(--cols);
    grid-template-rows: 37px repeat(32, 38px);
    font-family: Lato, "Open Sans", sans-serif;
    font-size: 26px;
    color: #000;
    overflow: hidden;
    border-bottom: 2px solid #a0a0a0;
}

.corner {
    grid-column: 1;
    grid-row: 1;
    background: #e6e6e6;
    border-right: 1px solid #b5b5b5;
    border-bottom: 2px solid #9a9a9a;
    padding: 4px 0 0 16px;
}

.ch-cell {
    grid-row: 1;
    background: #e6e6e6;
    border-right: 1px solid #b5b5b5;
    border-bottom: 2px solid #9a9a9a;
    padding-top: 3px;
    display: flex;
    align-items: center;
    justify-content: center;
}

.ch-cell.on {
    background: #d0d0d0;
    color: #2e6b41;
    border-bottom: 3px solid #3b714a;
}

.rh-cell {
    grid-column: 1;
    background: #e6e6e6;
    border-right: 1px solid #9a9a9a;
    border-bottom: 1px solid #c0c0c0;
    padding-top: 3px;
    display: flex;
    align-items: center;
    justify-content: center;
}

.rh-cell.on {
    background: #d0d0d0;
    color: #2e6b41;
    border-right: 3px solid #3b714a;
}

.gridlines {
    grid-column: 2 / -1;
    grid-row: 2 / -1;
    display: grid;
    grid-template-columns: var(--cols);
    background: repeating-linear-gradient(#fff 0, #fff 37px, #d6d6d6 37px, #d6d6d6 38px);
}

.gridlines div {
    border-right: 1px solid #d6d6d6;
}

/* pivot cells */
.pv {
    background: #fff;
    padding: 3px 5px 0;
    display: flex;
    align-items: center;
    white-space: nowrap;
    overflow: hidden;
}

.r8 { grid-row: 9; }
.r9 { grid-row: 10; }
.r10 { grid-row: 11; }
.r11 { grid-row: 12; }
.r12 { grid-row: 13; }
.ct { grid-column: 7; }
.cu { grid-column: 8; }
.cv { grid-column: 9; }

.num {
    justify-content: flex-end;
}

.head,
.total {
    background: #d9e1f2;
    font-weight: 700;
    font-size: 27.500px;
}

.head {
    border-bottom: 2px solid #8ea9db;
}

.total {
    border-top: 2px solid #8ea9db;
    height: 38px;
}

.sel {
    position: relative;
    overflow: visible;
    outline: 3px solid #3b714a;
    outline-offset: -1px;
}

.sel::after {
    content: "";
    position: absolute;
    right: -5px;
    bottom: -5px;
    width: 9px;
    height: 9px;
    background: #3b714a;
    border: 1px solid #fff;
}

.pv-filter {
    position: absolute;
    right: 3px;
    top: 4px;
    width: 33px;
    height: 32px;
    background: #fff;
    border: 1px solid #c0c0c0;
    display: flex;
    align-items: center;
    justify-content: center;
}

/* scrollbars */
.vscroll {
    width: 32px;
    margin-left: 2px;
    background: #d9d9d9;
    display: flex;
    flex-direction: column;
}

.sb-btn {
    height: 34px;
    background: #fff;
    border: 2px solid #b0b0b0;
    display: flex;
    align-items: center;
    justify-content: center;
    flex: none;
}

.sb-thumb {
    height: 1145px;
    background: #fff;
    border: 2px solid #b0b0b0;
    flex: none;
}

.sb-down {
    margin-top: 39px;
}

.sheetbar {
    height: 42px;
    flex: none;
    display: flex;
    font-size: 25.800px;
}

.sheet-nav {
    width: 142px;
    padding: 5px 0 0 29px;
    border-right: 1px solid #bcbcbc;
    margin-bottom: 5px;
    display: flex;
    gap: 32px;
}

.sheet-tab {
    width: 221px;
    padding: 0 0 0 19px;
    height: 40px;
    display: flex;
    align-items: center;
    font-family: "Open Sans", sans-serif;
    white-space: nowrap;
}

.sheet-tab.on {
    width: 91px;
    padding: 0;
    justify-content: center;
    background: #fff;
    color: #3b714a;
    font-weight: 700;
    font-size: 25.500px;
    border-bottom: 3px solid #3b714a;
}

.add-sheet {
    margin: 6px 0 0 49px;
}

.hs-dots {
    margin: 8px 0 0 1078px;
}

.hscroll {
    width: 1024px;
    height: 33px;
    margin: 5px 0 0 21px;
    display: flex;
    background: #d9d9d9;
}

.hs-btn {
    width: 33px;
    background: #fff;
    border: 2px solid #b0b0b0;
    flex: none;
    display: flex;
    align-items: center;
    justify-content: center;
}

.hs-track {
    width: 433px;
    flex: none;
}

.hs-thumb {
    flex: 1;
    background: #fff;
    border: 2px solid #b0b0b0;
}

/* pivot panel */
.panel {
    width: 671px;
    flex: none;
    font-size: 23px;
    color: #444;
}

.panel-head {
    height: 80px;
    padding-left: 20px;
    display: flex;
    align-items: center;
}

.panel-title {
    font-size: 42px;
    font-weight: 300;
    color: #21613b;
    letter-spacing: -1px;
    width: 520px;
    white-space: nowrap;
}

.ph-caret {
    margin: 2px 0 0 0;
}

.ph-close {
    margin: 2px 0 0 67px;
}

.choose-row {
    height: 53px;
    margin-top: 6px;
    padding-left: 26px;
    display: flex;
    align-items: center;
    justify-content: space-between;
    padding-right: 21px;
    font-size: 25px;
}

.gear-btn {
    width: 85px;
    height: 53px;
    background: #fbfbfb;
    border: 2px solid #b3b3b3;
    display: flex;
    align-items: center;
    justify-content: center;
    gap: 12px;
    padding-left: 4px;
}

.field-search {
    height: 40px;
    margin: 29px 21px 0 26px;
    background: #fff;
    border: 2px solid #aaa;
    display: flex;
    align-items: center;
    justify-content: space-between;
    padding-left: 2px;
    color: #777;
}

.field-list {
    height: 508px;
    margin: 36px 21px 0 24px;
    background: #fdfdfd;
    display: flex;
    overflow: hidden;
}

.fields {
    flex: 1;
    margin-top: -7px;
    padding-left: 4px;
}

.field {
    height: 40.2px;
    display: flex;
    align-items: center;
    gap: 10px;
    font-size: 22.300px;
}

.field .box {
    margin-bottom: 8px;
}

.field.on {
    font-weight: 700;
}

.box {
    width: 26px;
    height: 26px;
    flex: none;
    background: #fff;
    border: 1px solid #9a9a9a;
    display: flex;
    align-items: center;
    justify-content: center;
}

.list-scroll {
    width: 32px;
    margin-right: 1px;
    background: #f0f0f0;
    display: flex;
    flex-direction: column;
}

.ls-btn {
    height: 33px;
    margin-top: 1px;
    background: #fdfdfd;
    border: 2px solid #aaa;
    display: flex;
    align-items: center;
    justify-content: center;
    flex: none;
}

.ls-thumb {
    height: 360px;
    margin-top: 32px;
    background: #fdfdfd;
    border: 2px solid #aaa;
    flex: none;
}

.ls-down {
    margin-top: 47px;
}

.drag-text {
    margin: 35px 0 0 31px;
    line-height: 30px;
    font-size: 22.700px;
    white-space: nowrap;
}

.areas {
    width: 620px;
    height: 340px;
    margin: 36px 0 0 30px;
    display: grid;
    grid-template-columns: 309px 311px;
    grid-template-rows: 169px 171px;
}

.area {
    display: flex;
    flex-direction: column;
}

.a-filters,
.a-rows {
    padding-right: 13px;
}

.a-cols,
.a-vals {
    border-left: 2px solid #bcbcbc;
    padding-left: 3px;
}

.a-filters,
.a-cols {
    padding-bottom: 13px;
    border-bottom: 2px solid #bcbcbc;
}

.area-head {
    height: 44px;
    flex: none;
    padding: 0 0 4px 8px;
    display: flex;
    align-items: center;
    gap: 14px;
}

.a-cols .area-head,
.a-vals .area-head {
    padding-left: 9px;
    gap: 15px;
}

.a-rows .area-head,
.a-vals .area-head {
    height: 55px;
    padding-top: 8px;
    padding-bottom: 0;
}

.area-box {
    flex: 1;
    background: #fdfdfd;
    padding: 4px 2px;
    display: flex;
    flex-direction: column;
    gap: 5px;
}

.pill {
    height: 50px;
    border: 2px solid #b5b5b5;
    padding: 3px 16px 0 14px;
    display: flex;
    align-items: center;
    justify-content: space-between;
    background: #fdfdfd;
    white-space: nowrap;
}

.a-rows .pill,
.a-vals .pill {
    padding-top: 5px;
}

.pill-name {
    display: flex;
    align-items: center;
    gap: 9px;
}

.a-cols .pill {
    padding-left: 18px;
}

.panel-foot {
    height: 44px;
    margin: 42px 22px 0 31px;
    display: flex;
    align-items: center;
    font-size: 22.700px;
}

.defer-box {
    width: 25px;
    height: 26px;
    margin-right: 11px;
}

.update-btn {
    width: 91px;
    height: 44px;
    margin-left: auto;
    background: #fdfdfd;
    color: #a9a9a9;
    display: flex;
    align-items: center;
    justify-content: center;
}

/* strip at the right */
.side-strip {
    flex: 1;
    background: #f3f2f1;
}

.strip-btn {
    height: 81px;
    display: flex;
    align-items: center;
    justify-content: center;
}

.strip-btn.on {
    height: 80px;
    background: #d0d0d0;
}

/* status bar */
.statusbar {
    height: 61px;
    flex: none;
    border-top: 2px solid #c6c6c6;
    padding-left: 23px;
    display: flex;
    align-items: center;
    font-size: 19px;
}

.ready {
    padding-top: 4px;
}

.status-right {
    margin-left: auto;
    height: 100%;
    display: flex;
    align-items: center;
}

.view-btn {
    width: 84px;
    height: 100%;
    padding-top: 3px;
    display: flex;
    align-items: center;
    justify-content: center;
}

.view-btn.on {
    background: #d0cfce;
}

.zoom-slider {
    margin-top: 3px;
}

.zoom-pct {
    width: 70px;
    margin-left: 26px;
    padding-top: 4px;
    font-size: 19.500px;
}

/* red notes over the sheet */
.marks {
    position: absolute;
    left: 0;
    top: 0;
    pointer-events: none;
}

.note {
    position: absolute;
    font-family: "Liberation Sans", Arial, sans-serif;
    font-size: 25px;
    color: #e8392a;
    white-space: nowrap;
}

.n-ahede { left: 1874px; top: 692px; }
.n-forma { left: 1874px; top: 813px; line-height: 30px; }
.n-eyni { left: 1874px; top: 993px; line-height: 30px; }
.n-sil { left: 1874px; top: 1112px; line-height: 30px; }
.n-umumi { left: 856px; top: 1032px; }
.n-imtina { left: 1337px; top: 1031px; }
.n-left { left: 438px; top: 1238px; line-height: 38.500px; }
.n-right { left: 1167px; top: 1249px; line-height: 38.500px; }
```
